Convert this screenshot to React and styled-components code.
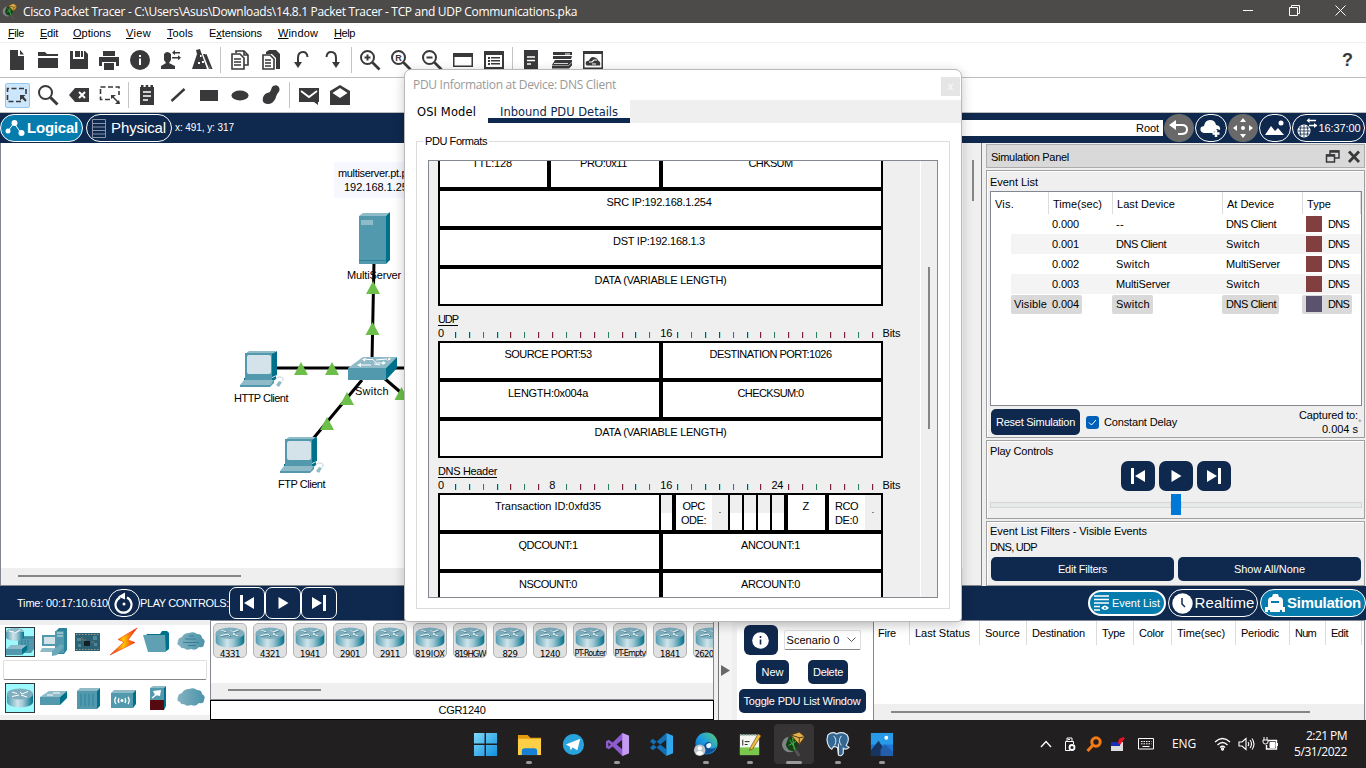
import React, { useLayoutEffect, useRef, useState } from "react";
import styled, { createGlobalStyle, css } from "styled-components";

const NAVY = "#0f284d";
const TEAL = "#067cae";
const INK = "#39393b";

const Global = createGlobalStyle`
  * { box-sizing: border-box; }
  body { margin: 0; overflow: hidden; background: #efefef; }
  body, button, input { font-family: "Liberation Sans", Arial, sans-serif; font-size: 11px; color: #000; }
  svg { display: block; flex: none; }
`;

/* Text whose tracking is adjusted so that it takes exactly w pixels. */
const Tracked = styled.span`
  display: inline-block;
  white-space: pre;
  line-height: 14px;
  font-size: ${(p) => p.$size || 11}px;
  font-weight: ${(p) => (p.$bold ? 700 : 400)};
  font-family: ${(p) => p.$font || "inherit"};
  color: ${(p) => p.$color || "inherit"};
  text-decoration: ${(p) => (p.$under ? "underline" : "none")};
  text-underline-offset: 2px;
`;
function Fit({ w, size, bold, font, color, under, children }) {
  const ref = useRef(null);
  const [ls, setLs] = useState(0);
  useLayoutEffect(() => {
    if (!w) return;
    const nat = ref.current.getBoundingClientRect().width;
    const n = ref.current.textContent.length;
    setLs((w - nat) / n);
  }, [w]);
  return (
    <Tracked ref={ref} $size={size} $bold={bold} $font={font} $color={color} $under={under} style={{ letterSpacing: ls + "px" }}>
      {children}
    </Tracked>
  );
}

const SEGOE = '"Open Sans", "Noto Sans", sans-serif';
const VERDANA = '"DejaVu Sans", sans-serif';

const Screen = styled.div`
  position: relative;
  display: flex;
  flex-direction: column;
  width: 1366px;
  height: 768px;
  overflow: hidden;
  background: #efefef;
`;

/* ---------- title and menu ---------- */
const TitleBar = styled.header`
  display: flex;
  align-items: center;
  height: 23px;
  flex: none;
  padding-left: 2px;
  gap: 5px;
  background: #4d4b4a;
  color: #fff;
`;
const WindowButtons = styled.div`
  display: flex;
  gap: 35px;
  margin-left: auto;
  padding: 0 20px 3px 0;
`;
const MenuBar = styled.nav`
  display: flex;
  align-items: center;
  height: 20px;
  flex: none;
  padding-left: 8px;
  background: #fff;
  border-bottom: 1px solid #f0f0f0;
`;
const MenuItem = styled.span`
  width: ${(p) => p.$w}px;
  u { text-underline-offset: 1px; }
`;

const ToolBar = styled.div`
  display: flex;
  align-items: center;
  height: 35px;
  flex: none;
  padding-left: ${(p) => p.$pad || 1.5}px;
  background: #fff;
  border-bottom: 1px solid #bdbdbd;
`;
const Tool = styled.span`
  display: flex;
  align-items: center;
  justify-content: center;
  width: 30.850px;
  height: 25px;
`;
const ActiveTool = styled(Tool)`
  width: 25px;
  margin: 0 3px;
  background: #cce6fb;
  border: 1px solid #95c6ee;
  border-radius: 2px;
`;
const Sep = styled.span`
  width: 1px;
  height: 26px;
  margin: 0 3px;
  background: #c4c4c4;
`;
const HelpMark = styled.span`
  margin-left: auto;
  padding-right: 13px;
  font: bold 18px "Liberation Sans", sans-serif;
  color: ${INK};
`;

const glyphs = {
  file: <path d="M4 1h8v6h6v14H4zM14 1l4 4.500h-4z" />,
  folder: <path d="M1 3h7l2 2h11v2H1zM1 9h20v10H1z" />,
  save: <path d="M2 2h3v8h11V2h1l3 3v15H2zM7 2h5v6H7zM13 2h2v6h-2z" />,
  print: <path d="M5 2h12v5H5zM1 8h20v9h-3v-4H4v4H1zM6 14h10v7H6z" />,
  info: (<g><circle cx="11" cy="11" r="10" /><path d="M10 9.500h2V16h-2zM10 6h2v2h-2z" fill="#fff" /></g>),
  user: (<g><path d="M4 5q3-4 7 0v6l-2 3 6 3v3H1v-3l5-3-2-3z" /><path d="M13 3h7v1.500h-7zM12 8h7v1.500h-7z" /><path d="M15 1v5l-3-2.200zM18 6.300v5l3-2.500z" /></g>),
  compass: (<g><path d="M5 1l4-1 1 3 6 17H1L6 5z" /><path d="M13.500 6l2-1 6 15h-2zM12 5h2l5 15h-1z" /><path d="M9 6h1.500v2H9zM7 13h2v2H7zM11 12h2v2h-2z" fill="#fff" /></g>),
  copy: (<g fill="none" stroke={INK} strokeWidth="1.600"><path d="M7 4V2h8l4 4v10h-4" /><path d="M3 5h8l4 4v11H3z" fill="#fff" /><path d="M5 10h7M5 13h7M5 16h7M15 2v4h4" /></g>),
  paste: (<g><path d="M6 3l3-2h7l4 4v15h-4V9l-4-4H6z" /><path d="M3 6h7l4 4v10H3z" fill="#fff" stroke={INK} strokeWidth="1.600" /><path d="M5 11h6M5 14h6M5 17h6" stroke={INK} strokeWidth="1.500" /></g>),
  undo: (<g><path d="M7 14V9q0-6 5-6 4 0 4.500 5" fill="none" stroke={INK} strokeWidth="2" /><path d="M3 13h8l-4 6z" /></g>),
  redo: (<g><path d="M15 14V9q0-6-5-6-4 0-4.500 5" fill="none" stroke={INK} strokeWidth="2" /><path d="M11 13h8l-4 6z" /></g>),
  zoomIn: (<g fill="none" stroke={INK} strokeWidth="2"><circle cx="8.500" cy="8.500" r="6.500" /><path d="M13.500 13.500l7 7" strokeWidth="2.600" /><path d="M5.500 8.500h6M8.500 5.500v6" /></g>),
  zoomReset: (<g><g fill="none" stroke={INK} strokeWidth="2"><circle cx="8.500" cy="8.500" r="6.500" /><path d="M13.500 13.500l7 7" strokeWidth="2.600" /></g><text x="5.300" y="12" fontSize="9" fontWeight="bold">R</text></g>),
  zoomOut: (<g fill="none" stroke={INK} strokeWidth="2"><circle cx="8.500" cy="8.500" r="6.500" /><path d="M13.500 13.500l7 7" strokeWidth="2.600" /><path d="M5.500 8.500h6" /></g>),
  window: <path d="M1 4h20v14H1zM2.500 8v8.500h17V8z" fillRule="evenodd" />,
  listWindow: (<g><path d="M1 2h20v18H1zM3 6v12h16V6z" fillRule="evenodd" /><path d="M5 8h2v2H5zM8 8h9v1.600H8zM5 11h2v2H5zM8 11h9v1.600H8zM5 14h2v2H5zM8 14h9v1.600H8z" /></g>),
  doc: (<g><path d="M4 1h14v20H4z" /><path d="M7 8h8M7 11.500h8M7 15h4" stroke="#fff" strokeWidth="1.300" /></g>),
  stack: (<g><path d="M2 3h19v3H2zM2 7h19l-1 3H2z" /><path d="M14 5h5" stroke="#fff" /><path d="M4 11h17v2l-3 3H1z" /><path d="M1 16.500h17l3-3v3l-3 3H1z" /><path d="M3 14.500h14" stroke="#fff" strokeWidth=".8" /></g>),
  cloudWindow: (<g><path d="M1 2h20v18H1zM2.500 5v13.500h17V5z" fillRule="evenodd" /><path d="M5 16.500q-2-1-1-4l3-1q2-5 6-3 3 1 3 3 3 1 2 5z" /><path d="M7 13h3l2-2h3M10 15h4" fill="none" stroke="#fff" strokeWidth="1.100" /></g>),
  marquee: (<g><path d="M1.500 8V4.500H20V11M1.500 11v6.500H15" fill="none" stroke={INK} strokeWidth="1.600" strokeDasharray="5 2.500" /><path d="M14 11h5.500l-1.800 1.800 3 3.500-1.400 1.400-3.200-3.200L14 16.500z" /></g>),
  search: (<g fill="none" stroke={INK}><circle cx="8.500" cy="8.500" r="6.500" strokeWidth="2" /><path d="M13.500 13.500l7 7" strokeWidth="3" /></g>),
  erase: (<g><path d="M7 4h14v14H7l-6-7z" /><path d="M11 8l6 6M17 8l-6 6" stroke="#fff" strokeWidth="2" /></g>),
  resize: (<g><path d="M1.500 3h18.500v8M1.500 5v10.500H12" fill="none" stroke={INK} strokeWidth="1.600" strokeDasharray="5 2.500" /><path d="M13 12l7 7" stroke={INK} strokeWidth="1.500" /><path d="M12 11h5l-5 4zM21 20h-5l4-4z" /></g>),
  note: (<g><path d="M4 3h14v18H4z" /><path d="M5 1h2.500v3H5zM9.700 1h2.500v3H9.700zM14.500 1H17v3h-2.500z" /><path d="M7 8h8M7 12h8M7 16h5" stroke="#fff" strokeWidth="1.500" /></g>),
  line: <path d="M4.500 17L17.500 5" stroke={INK} strokeWidth="2.400" />,
  rect: <path d="M2 6h18v11H2z" />,
  oval: <ellipse cx="11" cy="11.500" rx="8.500" ry="5" />,
  blob: <path d="M12 3q3-3 6.500-.5Q21 6 17.500 9.500q-1 1.500-2 5Q12.500 20.500 7 20q-5.500-1-4-6.500Q4.500 9 9 8.500q1.500-.5 3-5.500z" />,
  mail: (<g><path d="M1 4h20v14h-1v3l-4-3H1z" /><path d="M3 7l8 6 8-6" fill="none" stroke="#fff" strokeWidth="1.800" /></g>),
  mailOpen: (<g><path d="M11 1l10 6v14H1V7z" /><path d="M3.500 9L11 4l7.500 5L11 14z" fill="#fff" /></g>),
};
const Glyph = ({ name }) => (
  <svg width="22" height="22" viewBox="0 0 22 22" fill={INK}>{glyphs[name]}</svg>
);
const toolsTop = ["file", "folder", "save", "print", "info", "user", "compass", "|", "copy", "paste", "undo", "redo", "|", "zoomIn", "zoomReset", "zoomOut", "window", "listWindow", "|", "doc", "stack", "cloudWindow"];
const toolsBottom = ["search", "erase", "resize", "|", "note", "line", "rect", "oval", "blob", "|", "mail", "mailOpen"];
const renderTools = (list) => list.map((t, i) => (t === "|" ? <Sep key={i} /> : <Tool key={i}><Glyph name={t} /></Tool>));

/* ---------- navy bars ---------- */
const NavBar = styled.div`
  display: flex;
  align-items: center;
  height: 30px;
  flex: none;
  padding: 0 1px 0 0;
  background: ${NAVY};
  color: #fff;
`;
const Pill = styled.div`
  display: flex;
  align-items: center;
  justify-content: center;
  gap: ${(p) => p.$gap ?? 3}px;
  flex: none;
  width: ${(p) => p.$w}px;
  height: ${(p) => p.$h || 28}px;
  margin-right: ${(p) => p.$mr || 0}px;
  border: ${(p) => p.$bw || 1}px solid #fff;
  border-radius: 15px;
  background: ${(p) => (p.$on ? TEAL : NAVY)};
  color: #fff;
  ${(p) => p.$grey && css`background: #696969; border-color: #696969;`}
`;
const RootField = styled.div`
  display: flex;
  flex: 1;
  justify-content: flex-end;
  align-items: center;
  height: 16px;
  margin-left: 400px;
  padding-right: 4px;
  margin-right: 1px;
  background: #fff;
  color: #000;
`;

/* ---------- workspace ---------- */
const Main = styled.main`
  display: flex;
  height: 443px;
  flex: none;
`;
const Workspace = styled.section`
  display: grid;
  grid-template: 425px 17px / 962px 18px;
  width: 982px;
  border: 1px solid #82878f;
  border-top: 0;
  background: #efefef;
`;
const Canvas = styled.div`
  position: relative;
  background: #fff;
  overflow: hidden;
`;
const CanvasLabel = styled.div`
  position: absolute;
  left: ${(p) => p.$x}px;
  top: ${(p) => p.$y}px;
  width: 100px;
  text-align: center;
`;
const HostNote = styled.div`
  position: absolute;
  left: 333px;
  top: 19px;
  width: 100px;
  height: 36px;
  padding: 4px 0 0 4px;
  background: #f7f7ff;
  display: flex;
  flex-direction: column;
`;
const HostAddress = styled.div`padding-left: 6px;`;
const VTrack = styled.div`padding: 17px 0 0 9px;`;
const HTrack = styled.div`padding: 7px 0 0 17px;`;
const Thumb = styled.div`
  width: ${(p) => p.$w}px;
  height: ${(p) => p.$h}px;
  background: #858585;
`;

const PcArt = () => (
  <g>
    <path d="M5 3l4-3h27l-3 3z" fill="#8fbac8" />
    <path d="M5 2h28v24H5z" fill="#5399ae" />
    <path d="M32 3l5-3v24l-5 2z" fill="#00718b" />
    <rect x="7" y="4" width="24" height="19" rx="2" fill="#d3e3e9" />
    <path d="M4 27h28l4-2v3l-4 3H4z" fill="#00718b" />
    <path d="M5 26h27v3H5z" fill="#5399ae" />
    <path d="M4 29h30l-4 5H0z" fill="#8fbac8" />
    <path d="M0 34h30l4-5v3l-4 4H0z" fill="#5399ae" />
    <path d="M36 28q1-3 5-2 4 2 1 4" fill="none" stroke="#c3d2d8" />
    <path d="M36 34l3-4 3 1-3 5z" fill="#8fbac8" />
  </g>
);
const Triangle = ({ x, y }) => <path d={`M${x} ${y - 7}l7 13h-14z`} fill="#6cc04a" />;
const Topology = () => (
  <svg width="420" height="425" viewBox="1 143 420 425">
    <g stroke="#000" strokeWidth="3">
      <path d="M374 262L372 360M270 368H350M390 368H420M362 380L312 440M384 378L420 409" />
    </g>
    <path d="M359 216l4-3h27l-4 3z" fill="#8fbac8" />
    <path d="M386 216l4-4v48l-4 4z" fill="#00718b" />
    <path d="M359 216h27v48h-27z" fill="#5399ae" />
    <path d="M361 220h12v5h-12z" fill="#8fbac8" />
    <path d="M359 260.500h27" stroke="#28809a" />
    <path d="M348 368l15-11h34l-11 11z" fill="#8fbac8" />
    <path d="M348 368h38v12h-38z" fill="#5399ae" />
    <path d="M386 368l11-11v11l-11 12z" fill="#00718b" />
    <path d="M366 359.500h7l3 3.500h8M376 360l11-1M360 365h11M374 364l6 1" stroke="#fff" strokeWidth="1" fill="none" />
    <path d="M366 357.500l-4 2 3 2zM389 357.500l-2 3.500 4-2zM361 363l-4 2 4 2zM383 361l-1 4 4-2z" fill="#fff" />
    <g transform="translate(240 351)"><PcArt /></g>
    <g transform="translate(280 437)"><PcArt /></g>
    <Triangle x={373} y={288} /><Triangle x={372.500} y={329} /><Triangle x={301} y={369} />
    <Triangle x={332} y={369} /><Triangle x={347} y={399} /><Triangle x={327} y={424} /><Triangle x={401.500} y={394} />
  </svg>
);

/* ---------- simulation panel ---------- */
const SimPanel = styled.aside`
  display: flex;
  flex-direction: column;
  gap: 2px;
  width: 380px;
  margin-left: 4px;
  padding: 1px 1px 0 0;
`;
const SimHeader = styled.div`
  display: flex;
  align-items: center;
  justify-content: space-between;
  height: 25px;
  padding: 1px 3px 0 4px;
  background: #d9d9d9;
  border: 1px solid #adadad;
`;
const HeaderIcons = styled.div`display: flex; gap: 7px;`;
const Group = styled.section`
  height: ${(p) => p.$h}px;
  flex: none;
  padding: 0 2px 0 3px;
  border: 1px solid #a0a0a0;
  box-shadow: inset 1px 1px #fff;
  overflow: hidden;
`;
const Line = styled.div`
  display: flex;
  align-items: center;
  height: ${(p) => p.$h}px;
  padding-top: ${(p) => p.$pt || 0}px;
`;
const EventTable = styled.div`
  height: 215px;
  border: 1px solid #828790;
  background: #fff;
`;
const EventRow = styled.div`
  display: grid;
  grid-template-columns: 37px 64px 110px 80px 58px;
  align-items: center;
  height: 20px;
  margin-left: 20px;
  background: ${(p) => (p.$alt ? "#f4f4f4" : "#fff")};
`;
const EventHead = styled.div`
  display: grid;
  grid-template-columns: 58px 64px 110px 80px 58px;
  height: 22px;
`;
const HeadCell = styled.div`
  display: flex;
  align-items: center;
  padding: 1px 0 0 4px;
  border-right: 1px solid #dcdcdc;
`;
const Cell = styled.div`
  display: flex;
  align-items: center;
  justify-self: start;
  height: 19px;
  padding: 0 3px 0 ${(p) => p.$pl ?? 4}px;
  border-radius: 2px;
  background: ${(p) => (p.$sel ? "#d9d9d9" : "transparent")};
`;
const Swatch = styled.i`
  width: 16px;
  height: 16px;
  margin-right: 6px;
  background: ${(p) => p.$c};
`;
const Btn = styled.button`
  display: flex;
  align-items: center;
  justify-content: center;
  flex: none;
  width: ${(p) => p.$w}px;
  height: ${(p) => p.$h}px;
  padding: 0;
  border: 0;
  border-radius: ${(p) => p.$r || 5}px;
  background: ${NAVY};
  color: #fff;
`;
const ActionLine = styled.div`
  display: flex;
  align-items: center;
  padding: 2px 0 0 1px;
`;
const Check = styled.span`
  display: flex;
  align-items: center;
  justify-content: center;
  width: 13px;
  height: 13px;
  margin: 0 5px 0 6px;
  border-radius: 3px;
  background: #005fb8;
`;
const Captured = styled.div`
  display: flex;
  flex-direction: column;
  align-items: flex-end;
  margin-left: auto;
`;
const Star = styled.span`
  width: 4px;
  color: #999;
  font-size: 9px;
`;
const PlayRow = styled.div`
  display: flex;
  justify-content: center;
  gap: 4px;
`;
const Slider = styled.div`
  display: flex;
  align-items: center;
  height: 21px;
  margin-top: 3px;
  &::before, &::after { content: ""; height: 4px; border: 1px solid #d6d6d6; background: #e7eaea; flex: 1; }
`;
const Knob = styled.i`width: 10px; height: 21px; background: #0078d7;`;
const FilterButtons = styled.div`display: flex; gap: 4px; padding: 3px 0 0 1px;`;

const events = [
  ["", "0.000", "--", "DNS Client"],
  ["", "0.001", "DNS Client", "Switch"],
  ["", "0.002", "Switch", "MultiServer"],
  ["", "0.003", "MultiServer", "Switch"],
  ["Visible", "0.004", "Switch", "DNS Client"],
];
const widths = { "DNS Client": 50, Switch: 34, MultiServer: 54, "--": 8 };

const PrevIcon = () => <svg width="16" height="18" viewBox="0 0 16 18" fill="#fff"><path d="M1 1h3v16H1zM15 3v12L5 9z" /></svg>;
const PlayIcon = () => <svg width="12" height="14" viewBox="0 0 12 14" fill="#fff"><path d="M1.500 1v12L11.500 7z" /></svg>;
const NextIcon = () => <svg width="16" height="18" viewBox="0 0 16 18" fill="#fff"><path d="M12 1h3v16h-3zM1 3v12l10-6z" /></svg>;

function Simulation() {
  return (
    <SimPanel>
      <SimHeader>
        <Fit w={78}>Simulation Panel</Fit>
        <HeaderIcons>
          <svg width="15" height="15" viewBox="0 0 15 15" fill="none" stroke={INK} strokeWidth="1.500"><path d="M5 5V2h9v7h-4" /><path d="M5 2.500h9" strokeWidth="2.500" /><path d="M1.500 6h8v7h-8z" /><path d="M1.500 6.500h8" strokeWidth="2.500" /></svg>
          <svg width="14" height="15" viewBox="0 0 14 15"><path d="M2 2.500l10 10.500M12 2.500L2 13" stroke={INK} strokeWidth="2.800" /></svg>
        </HeaderIcons>
      </SimHeader>
      <Group $h={268}>
        <Line $h={20} $pt={2}><Fit w={48}>Event List</Fit></Line>
        <EventTable>
          <EventHead>
            <HeadCell><Fit w={19}>Vis.</Fit></HeadCell>
            <HeadCell><Fit w={49}>Time(sec)</Fit></HeadCell>
            <HeadCell><Fit w={58}>Last Device</Fit></HeadCell>
            <HeadCell><Fit w={47}>At Device</Fit></HeadCell>
            <HeadCell><Fit w={24}>Type</Fit></HeadCell>
          </EventHead>
          {events.map(([vis, time, last, at], i) => {
            const sel = i === 4;
            return (
              <EventRow key={i} $alt={i % 2 === 1}>
                {vis ? <Cell $sel={sel} $pl={3}><Fit w={33}>{vis}</Fit></Cell> : <span />}
                <Cell $sel={sel} $pl={4}><Fit w={27}>{time}</Fit></Cell>
                <Cell $sel={sel} $pl={4}><Fit w={widths[last]}>{last}</Fit></Cell>
                <Cell $sel={sel} $pl={4}><Fit w={widths[at]}>{at}</Fit></Cell>
                <Cell $sel={sel} $pl={4}><Swatch $c={sel ? "#5b5270" : "#823f40"} /><Fit w={21}>DNS</Fit></Cell>
              </EventRow>
            );
          })}
        </EventTable>
        <ActionLine>
          <Btn $w={89} $h={26}><Fit w={79}>Reset Simulation</Fit></Btn>
          <Check><svg width="9" height="7" viewBox="0 0 9 7"><path d="M1 3.500L3.500 6 8 1" fill="none" stroke="#fff" /></svg></Check>
          <Fit w={73}>Constant Delay</Fit>
          <Captured><Fit w={59}>Captured to:</Fit><Fit w={36}>0.004 s</Fit></Captured>
          <Star>*</Star>
        </ActionLine>
      </Group>
      <Group $h={79}>
        <Line $h={20}><Fit w={63}>Play Controls</Fit></Line>
        <PlayRow>
          <Btn $w={34} $h={30} $r={7}><PrevIcon /></Btn>
          <Btn $w={34} $h={30} $r={7}><PlayIcon /></Btn>
          <Btn $w={34} $h={30} $r={7}><NextIcon /></Btn>
        </PlayRow>
        <Slider><Knob /></Slider>
      </Group>
      <Group $h={65}>
        <Line $h={17}><Fit w={157}>Event List Filters - Visible Events</Fit></Line>
        <Line $h={15}><Fit w={47}>DNS, UDP</Fit></Line>
        <FilterButtons>
          <Btn $w={183} $h={24}><Fit w={49}>Edit Filters</Fit></Btn>
          <Btn $w={183} $h={24}><Fit w={71}>Show All/None</Fit></Btn>
        </FilterButtons>
      </Group>
    </SimPanel>
  );
}

/* ---------- playback bar ---------- */
const PlayBar = styled.div`
  display: flex;
  align-items: center;
  height: 34px;
  flex: none;
  padding-left: 17px;
  background: ${NAVY};
  color: #fff;
`;
const SquareBtn = styled.span`
  display: flex;
  align-items: center;
  justify-content: center;
  width: 36px;
  height: 32px;
  border: 1px solid #fff;
  border-radius: 7px;
`;
const RightModes = styled.div`
  display: flex;
  align-items: center;
  margin-left: auto;
`;

/* ---------- device palette ---------- */
const Bottom = styled.section`
  display: flex;
  height: 100px;
  flex: none;
`;
const Palette = styled.div`
  display: flex;
  flex-direction: column;
  width: 210px;
  height: 90px;
  margin-top: 5px;
  padding-top: 2px;
  background: #fff;
`;
const PaletteRow = styled.div`
  display: flex;
  gap: 4.200px;
  padding-left: 5px;
`;
const PaletteItem = styled.span`
  display: flex;
  align-items: center;
  justify-content: center;
  width: 30px;
  height: 30px;
  ${(p) => p.$on && css`background: #9cfaff; border: 1px solid #2c3a40;`}
`;
const SearchBox = styled.div`
  height: 20px;
  margin: 3px 3px;
  border: 1px solid #dedede;
  border-bottom-color: #868686;
  border-radius: 2px;
`;
const DeviceColumn = styled.div`
  display: flex;
  flex-direction: column;
  width: 504px;
  margin-right: 1px;
`;
const DeviceList = styled.div`
  display: flex;
  flex-direction: column;
  justify-content: space-between;
  height: 80px;
  border: 1px solid #828790;
  background: #fff;
  overflow: hidden;
`;
const DeviceRow = styled.div`
  display: flex;
  gap: 6px;
  padding: 2px 0 0 2px;
`;
const Device = styled.div`
  display: flex;
  flex-direction: column;
  align-items: center;
  flex: none;
  width: 34px;
  height: 35px;
  padding-top: 3px;
  border: 1px solid #b4b4b4;
  border-radius: 5px;
  background: #e1e1e1;
  overflow: hidden;
`;
const DeviceName = styled.div`
  display: flex;
  justify-content: center;
  height: 11px;
  margin-top: -1px;
  line-height: 11px;
`;
const DeviceTrack = styled.div`
  height: 16px;
  padding: 6px 0 0 17px;
  background: #efefef;
`;
const ModelBox = styled.div`
  display: flex;
  align-items: center;
  justify-content: center;
  height: 20px;
  border: 1px solid #000;
  background: #fff;
`;
const Splitter = styled.div`
  display: flex;
  align-items: center;
  width: 14px;
  margin: 0 5px 0 3px;
  border-left: 1px solid #777;
  padding-left: 2px;
  background: #f4f4f4;
`;
const Scenario = styled.div`
  display: flex;
  flex-direction: column;
  align-items: center;
  gap: 5px;
  width: 136px;
  padding: 5px 6px 0 0;
  background: linear-gradient(#e8e8e8, #fff 14px);
`;
const ScenarioLine = styled.div`
  display: flex;
  align-items: center;
  gap: ${(p) => p.$g}px;
`;
const Select = styled.div`
  display: flex;
  align-items: center;
  justify-content: space-between;
  width: 77px;
  height: 20px;
  padding: 0 4px 0 2px;
  border: 1px solid #dedede;
  border-bottom-color: #868686;
  border-radius: 2px;
  background: #fff;
`;
const PduList = styled.div`
  display: flex;
  flex-direction: column;
  justify-content: space-between;
  flex: 1;
  margin-right: 1px;
  border: 1px solid #828790;
  border-bottom: 0;
  background: #fff;
`;
const PduHead = styled.div`display: flex; height: 24px;`;
const PduCol = styled.div`
  display: flex;
  align-items: center;
  width: ${(p) => p.$w}px;
  padding-left: 5px;
  border-right: 1px solid #dcdcdc;
  &:first-child { padding-left: 4px; }
`;
const PduTrack = styled.div`
  height: 16px;
  padding: 7px 0 0 17px;
  background: #efefef;
`;

const Defs = () => (
  <svg width="0" height="0" viewBox="0 0 1 1" style={{ position: "absolute" }}>
    <defs>
      <linearGradient id="metal"><stop offset="0" stopColor="#4f9bb1" /><stop offset=".4" stopColor="#cfe3e9" /><stop offset=".6" stopColor="#a5cad5" /><stop offset="1" stopColor="#00718b" /></linearGradient>
      <linearGradient id="haze"><stop offset="0" stopColor="#84b2c1" /><stop offset="1" stopColor="#4b93a9" /></linearGradient>
      <linearGradient id="gBolt" x1="0" x2="1"><stop offset="0" stopColor="#f01010" /><stop offset=".5" stopColor="#ffc800" /><stop offset="1" stopColor="#f01010" /></linearGradient>
      <linearGradient id="gWin" x1="0" y1="0" x2="1" y2="1"><stop offset="0" stopColor="#7fd8fb" /><stop offset="1" stopColor="#1090dd" /></linearGradient>
      <linearGradient id="gEdge" x1="0" y1="1" x2="1" y2="0"><stop offset="0" stopColor="#0b5cab" /><stop offset=".5" stopColor="#1b9de2" /><stop offset="1" stopColor="#5ed06a" /></linearGradient>
    </defs>
  </svg>
);
const RouterArt = ({ w = 30, h = 21 }) => (
  <svg width={w} height={h} viewBox="0 0 30 22">
    <path d="M0 6.500v9c0 8 30 8 30 0v-9z" fill="url(#metal)" />
    <ellipse cx="15" cy="6.500" rx="15" ry="6" fill="#7fafbf" />
    <path d="M6 3.500l5 1.500M24 3l-6 2.500-2-2M5 9l8-1.500M24 9.500l-6-2 2-1M13 7.500l2 2" stroke="#4d8496" strokeWidth="1.400" fill="none" transform="translate(.7 .7)" />
    <path d="M6 3.500l5 1.500M24 3l-6 2.500-2-2M5 9l8-1.500M24 9.500l-6-2 2-1M13 7.500l2 2" stroke="#fff" strokeWidth="1" fill="none" />
  </svg>
);
const CloudShape = () => <path d="M4 19q-4-1-2-5 0-3 4-4 2-4 7-4 5-2 8 1 5 0 5 4 4 2 2 6 0 4-5 3-3 4-8 2-5 2-7-1-3 1-4-2z" fill="url(#haze)" />;
const paletteArt = {
  network: (<g><path d="M13 14l3-5h13v13l-3 4H13z" fill="#5399ae" /><path d="M16 11h12M17 13v10M20 13v10M23 13v10" stroke="#28809a" /><ellipse cx="10" cy="4.500" rx="9" ry="3.500" fill="#8fbac8" /><path d="M1 5v5c0 5 18 5 18 0V5z" fill="url(#metal)" /><path d="M4 4l5 1M15 3l-5 3" stroke="#fff" /><path d="M1 22l5-4h16l-5 4z" fill="#8fbac8" /><path d="M1 22h16v6H1z" fill="#5399ae" /><path d="M17 22l5-4v5l-5 5z" fill="#00718b" /></g>),
  end: (<g><path d="M17 4l3-3h8v22l-3 4h-8z" fill="#2b839c" /><path d="M16 4h9v22h-9z" fill="#5399ae" /><path d="M18 6h6M18 9h6" stroke="#cfe2e8" /><path d="M3 8h15v11H3z" fill="#5399ae" /><path d="M5 10h11v7H5z" fill="#d3e3e9" /><path d="M3 21h15l-3 4H1z" fill="#8fbac8" /><path d="M13 24l9-7 3 2-7 9-5 1z" fill="#6ba8ba" /></g>),
  board: (<g><path d="M2 6h25v18H2z" fill="#2a6175" /><path d="M3 7.500h23M3 22.500h23" stroke="#a59a85" strokeDasharray="1.500 1.500" strokeWidth="1.200" /><path d="M11 14h6v5h-6z" fill="#151f25" /><path d="M4 11h4v3H4zM20 9h4v4h-4zM5 17h3v3H5zM21 16h3v3h-3z" fill="#4f8798" /><path d="M9 10v3h4M18 15h3" stroke="#8a7450" fill="none" /></g>),
  bolt: <path d="M29 1L10 12.500l6 2.500L2 28l25-12.500-7-2.500z" fill="url(#gBolt)" stroke="#f03a10" strokeWidth=".6" />,
  folder: (<g><path d="M4 7h14l2-3h5l2 2v16l-4 3z" fill="#00718b" /><path d="M1 8h22l1 17H6z" fill="#5fa0b3" /></g>),
  clouds: (<g><CloudShape /><path d="M9 12h11M7 15.500h16M13 9h5M12 18.500h8" stroke="#3b7f95" strokeWidth="1.200" /></g>),
  switch: (<g><path d="M1 14l9-6h18l-7 6z" fill="#8fbac8" /><path d="M1 14h20v8H1z" fill="#5399ae" /><path d="M21 14l7-6v7l-7 7z" fill="#00718b" /><path d="M8 12h6M14 10h7" stroke="#fff" /></g>),
  hub: (<g><path d="M4 8l3-3h20l-3 3z" fill="#8fbac8" /><path d="M4 8h20v18H4z" fill="#5399ae" /><path d="M24 8l3-3v18l-3 3z" fill="#00718b" /><path d="M8 11v12M12 11v12M16 11v12M20 11v12" stroke="#28809a" /></g>),
  wifi: (<g><path d="M3 10l3-3h22l-3 3z" fill="#8fbac8" /><path d="M3 10h22v15H3z" fill="#5399ae" /><path d="M25 10l3-3v14l-3 4z" fill="#00718b" /><circle cx="14" cy="17.500" r="1.500" fill="#fff" /><path d="M11 15q-1.500 2.500 0 5M17 15q1.500 2.500 0 5M8 14q-2.500 3.500 0 7M20 14q2.500 3.500 0 7" stroke="#fff" strokeWidth="1.300" fill="none" /></g>),
  asa: (<g><path d="M8 5l3-2h13l-2 2z" fill="#8fbac8" /><path d="M8 5h14v12H8z" fill="#5399ae" /><path d="M22 5l2-2v20l-2 4z" fill="#00718b" /><path d="M8 17h14v10H8z" fill="#550a10" /><path d="M11 8l8-1-1 6-5-1z" fill="#fff" /><path d="M10 15l5-4" stroke="#fff" strokeWidth="1.500" /></g>),
  cloud: <CloudShape />,
};
const Art = ({ name }) => (
  <svg width="30" height="30" viewBox="0 0 30 30">
    {name === "router" ? <g transform="translate(2 5)"><path d="M0 6v8c0 7 26 7 26 0V6z" fill="url(#metal)" /><ellipse cx="13" cy="6" rx="13" ry="5.500" fill="#7fafbf" /><path d="M5 4l5 1.500M21 3.500l-6 2.500-2-2M5 8.500l7-1.500M20 9l-6-2" stroke="#fff" fill="none" /></g> : paletteArt[name]}
  </svg>
);
const devices = [["4331", 20], ["4321", 20], ["1941", 20], ["2901", 20], ["2911", 20], ["819IOX", 30], ["819HGW", 31], ["829", 15], ["1240", 20], ["PT-Router", 31], ["PT-Empty", 31], ["1841", 20], ["2620XM", 31]];
const pduCols = [["Fire", 36, 18], ["Last Status", 70, 55], ["Source", 47, 35], ["Destination", 70, 53], ["Type", 37, 23], ["Color", 38, 25], ["Time(sec)", 64, 48], ["Periodic", 54, 38], ["Num", 36, 21], ["Edit", 36, 17]];

/* ---------- PDU dialog ---------- */
const Dialog = styled.div`
  position: absolute;
  left: 404px;
  top: 69px;
  width: 558px;
  height: 553px;
  border: 1px solid #b9b9b9;
  border-radius: 7px 7px 4px 4px;
  background: #fff;
  box-shadow: 0 3px 12px rgba(0, 0, 0, 0.22);
  display: flex;
  flex-direction: column;
`;
const DialogTitle = styled.div`
  display: flex;
  align-items: center;
  justify-content: space-between;
  height: 30px;
  padding-left: 8px;
`;
const CloseX = styled.span`
  display: flex;
  align-items: center;
  justify-content: center;
  width: 19px;
  height: 19px;
  margin-top: 3px;
  margin-right: 1px;
  background: #e5e5e5;
  color: #f7f7f7;
  font: bold 10px "Liberation Sans", sans-serif;
`;
const Tabs = styled.div`
  display: flex;
  height: 23px;
  background: #efefef;
`;
const Tab = styled.div`
  display: flex;
  align-items: center;
  justify-content: center;
  width: ${(p) => p.$w}px;
  padding-top: ${(p) => (p.$on ? 5 : 1)}px;
  background: #fff;
  border-bottom: ${(p) => (p.$on ? `5px solid ${NAVY}` : "0")};
`;
const Formats = styled.fieldset`
  display: flex;
  width: 534px;
  height: 475px;
  margin: 11px 0 0 11px;
  padding: 12px 11px 10px;
  border: 1px solid #dcdcdc;
`;
const Legend = styled.legend`
  height: 14px;
  margin-left: -5px;
  padding: 0 2px;
  line-height: 14px;
`;
const Scroller = styled.div`
  display: flex;
  width: 510px;
  height: 438px;
  border: 1px solid #828790;
  background: #efefef;
  overflow: hidden;
`;
const PduBody = styled.div`
  width: 492px;
  padding-left: 9px;
  border-right: 1px solid #fff;
  height: 436px;
  overflow: hidden;
`;
const PduTrackV = styled.div`padding: 106px 0 0 7px;`;
const Table = styled.div`
  width: 445px;
  margin-top: ${(p) => p.$mt || 0}px;
`;
const Row = styled.div`display: flex; height: 39px;`;
const Field = styled.div`
  display: flex;
  justify-content: center;
  align-items: flex-start;
  width: ${(p) => p.$w}px;
  flex: none;
  padding: 4px ${(p) => p.$pr ?? 3}px 0 0;
  border: 2px solid #000;
  background: #fff;
`;
const Flag = styled.div`
  width: ${(p) => p.$w}px;
  flex: none;
  border: solid #000;
  border-width: 2px ${(p) => (p.$last ? 2 : 0)}px 2px ${(p) => (p.$first ? 0 : 2)}px;
  background: linear-gradient(#efefef 18px, #fff 18px);
`;
const Narrow = styled.div`
  display: flex;
  width: ${(p) => p.$w}px;
  flex: none;
  border: 2px solid #000;
  background: #fff;
`;
const NarrowText = styled.div`
  display: flex;
  flex-direction: column;
  align-items: center;
  flex: 1;
  padding: 4px 1px 0 0;
`;
const Overflow = styled.div`
  display: flex;
  align-items: center;
  justify-content: center;
  width: 16px;
  background: #efefef;
  &::after { content: ""; width: 2px; height: 1px; background: #888; }
`;
const Heading = styled.div`
  height: 14px;
  margin-top: 6px;
`;
const Ruler = styled.div`
  display: flex;
  height: 14px;
  width: 480px;
  align-items: center;
`;
const Bit = styled.span`
  display: flex;
  width: 13.900px;
  flex: none;
  white-space: nowrap;
`;
const Tick = styled.i`
  width: 2px;
  height: 6px;
  margin: 4px 0 0 3px;
  background: ${(p) => (p.$odd ? "linear-gradient(90deg,#7a2436 50%,#a5dede 50%)" : "linear-gradient(90deg,#2e7f62 50%,#e6e6f0 50%)")};
`;
const ScaleBar = ({ marks }) => (
  <Ruler>
    {Array.from({ length: 32 }, (_, i) => (
      <Bit key={i}>{marks.includes(i) ? <Fit w={i > 9 ? 12 : 6}>{String(i)}</Fit> : <Tick $odd={i % 3 !== 0} />}</Bit>
    ))}
    <Fit w={18}>Bits</Fit>
  </Ruler>
);

function PduDialog() {
  return (
    <Dialog>
      <DialogTitle>
        <Fit w={203} size={12} font={SEGOE} color="#999">PDU Information at Device: DNS Client</Fit>
        <CloseX>x</CloseX>
      </DialogTitle>
      <Tabs>
        <Tab $w={83}><Fit w={59} size={11.5} font={VERDANA}>OSI Model</Fit></Tab>
        <Tab $w={142} $on><Fit w={118} size={11.5} font={VERDANA} color={NAVY}>Inbound PDU Details</Fit></Tab>
      </Tabs>
      <Formats>
        <Legend><Fit w={62}>PDU Formats</Fit></Legend>
        <Scroller>
          <PduBody>
            <Table $mt={-11}>
              <Row><Field $w={111}><Fit w={40}>TTL:128</Fit></Field><Field $w={112}><Fit w={47}>PRO:0x11</Fit></Field><Field $w={222}><Fit w={44}>CHKSUM</Fit></Field></Row>
              <Row><Field $w={445}><Fit w={105}>SRC IP:192.168.1.254</Fit></Field></Row>
              <Row><Field $w={445}><Fit w={92}>DST IP:192.168.1.3</Fit></Field></Row>
              <Row><Field $w={445} $pr={0}><Fit w={132}>DATA (VARIABLE LENGTH)</Fit></Field></Row>
            </Table>
            <Heading><Fit w={20} under>UDP</Fit></Heading>
            <ScaleBar marks={[0, 16]} />
            <Table $mt={1}>
              <Row><Field $w={223}><Fit w={87}>SOURCE PORT:53</Fit></Field><Field $w={222}><Fit w={122}>DESTINATION PORT:1026</Fit></Field></Row>
              <Row><Field $w={223}><Fit w={80}>LENGTH:0x004a</Fit></Field><Field $w={222}><Fit w={66}>CHECKSUM:0</Fit></Field></Row>
              <Row><Field $w={445} $pr={0}><Fit w={132}>DATA (VARIABLE LENGTH)</Fit></Field></Row>
            </Table>
            <Heading><Fit w={59} under>DNS Header</Fit></Heading>
            <ScaleBar marks={[0, 8, 16, 24]} />
            <Table $mt={1}>
              <Row>
                <Field $w={223}><Fit w={106}>Transaction ID:0xfd35</Fit></Field>
                <Flag $w={13} $last $first />
                <Narrow $w={56}><NarrowText><Fit w={22}>OPC</Fit><Fit w={25}>ODE:</Fit></NarrowText><Overflow /></Narrow>
                <Flag $w={12} $first /><Flag $w={14} /><Flag $w={14} /><Flag $w={16} $last />
                <Field $w={41} $pr={1}><Fit w={7}>Z</Fit></Field>
                <Narrow $w={56}><NarrowText><Fit w={23}>RCO</Fit><Fit w={23}>DE:0</Fit></NarrowText><Overflow /></Narrow>
              </Row>
              <Row><Field $w={223}><Fit w={59}>QDCOUNT:1</Fit></Field><Field $w={222}><Fit w={59}>ANCOUNT:1</Fit></Field></Row>
              <Row><Field $w={223}><Fit w={58}>NSCOUNT:0</Fit></Field><Field $w={222}><Fit w={59}>ARCOUNT:0</Fit></Field></Row>
            </Table>
          </PduBody>
          <PduTrackV><Thumb $w={2} $h={162} /></PduTrackV>
        </Scroller>
      </Formats>
    </Dialog>
  );
}

/* ---------- taskbar ---------- */
const TaskBar = styled.footer`
  display: flex;
  align-items: center;
  height: 48px;
  flex: none;
  padding-left: 463px;
  background: #211f20;
  color: #fff;
`;
const TaskItem = styled.span`
  display: flex;
  flex-direction: column;
  align-items: center;
  justify-content: flex-end;
  gap: 4px;
  width: 40px;
  height: 40px;
  margin: 0 2.050px;
  border-radius: 4px;
  background: ${(p) => (p.$active ? "#363435" : "transparent")};
  &::after { content: ""; width: ${(p) => (p.$active ? 16 : 6)}px; height: 3px; border-radius: 2px; background: ${(p) => (p.$dot ? "#9a9a9a" : "transparent")}; }
`;
const Tray = styled.div`
  display: flex;
  align-items: center;
  margin-left: auto;
  padding-right: 19px;
`;
const TraySlot = styled.span`
  display: flex;
  justify-content: center;
  width: ${(p) => p.$w}px;
`;
const Clock = styled.div`
  display: flex;
  flex-direction: column;
  align-items: flex-end;
  gap: 2px;
  width: 58px;
`;
const PacketTracerArt = () => (
  <g><circle cx="9" cy="13" r="8" fill="#7d8483" /><path d="M8 5q10-1 10 9l-4 6q-8 0-9-7z" fill="#174018" /><path d="M9 8l6 10M8 14l9-5M12 6l2 13" stroke="#3db54a" /><path d="M10 3l9-3 6 5-6 8z" fill="#e2b04a" stroke="#4c3818" /><path d="M10 3l9 3 6-1M19 6v6" stroke="#4c3818" fill="none" /><path d="M15 19l4 6" stroke="#555" strokeWidth="3" /></g>
);
const taskArt = {
  win: <path d="M1 1h11v11H1zM13.500 1H25v11H13.500zM1 13.500h11V25H1zM13.500 13.500H25V25H13.500z" fill="url(#gWin)" />,
  files: (<g><path d="M1 3h10l3 3h11v6H1z" fill="#e59b0c" /><path d="M1 7h24v17H1z" fill="#ffcf48" /><path d="M5 24v-4q0-3 3-3h10q3 0 3 3v4z" fill="#1681d4" /></g>),
  telegram: (<g><circle cx="13" cy="13" r="11" fill="#29a3dc" /><path d="M5 13l15-6-3 12-5-3-2 3-1-4z" fill="#fff" /></g>),
  vs: (<g><path d="M18 1l7 3v18l-7 3L8 15l-4 3-3-1.500v-7L4 8l4 3zM18 8l-6 5 6 5zM3.500 11v4l2.500-2z" fill="#8e5bd0" fillRule="evenodd" /><path d="M18 1l7 3v18l-7 3z" fill="#c49bf0" /></g>),
  code: (<g><path d="M18 1v7L4 19l-3-2.500L18 1zM18 25v-7L4 7 1 9.500z" fill="#1270b8" /><path d="M18 1l7 3v18l-7 3z" fill="#30a7ee" /></g>),
  edge: (<g><circle cx="14" cy="12" r="11.500" fill="url(#gEdge)" /><path d="M12 13q4-5 7-1 0 4-3 4 4 3 9-1-4 7-11 8-5-4-2-10z" fill="#0f4f96" /><path d="M14 13q4-3 5 0 0 3-3 4-3-1-2-4z" fill="#e9f5ff" /><circle cx="7" cy="19" r="6" fill="#bec5cb" /><circle cx="7" cy="17" r="2.200" fill="#fff" /><path d="M3 22q4-5 8 0-4 4-8 0z" fill="#fff" /></g>),
  notepad: (<g><path d="M3 3h20v21H3z" fill="#f3f6f0" /><path d="M3 16h20v8H3z" fill="#7ac74b" /><path d="M3 3h20" stroke="#8a9" strokeWidth="2" strokeDasharray="2 1" /><path d="M6 8v6M8 10h5M8 13h3" stroke="#222" /><path d="M22 2l3 2-9 14-3 1 1-3z" fill="#e8c03a" stroke="#7e3c20" strokeWidth=".7" /></g>),
  tracer: <PacketTracerArt />,
  elephant: (<g><path d="M3 3q5-4 9-1 6-3 11 1 3 5-1 11l3 2q-3 3-6 1v5q-2 4-5 2l-1-8-4-1-2 3Q3 16 2 8z" fill="#336791" stroke="#dfeaf3" strokeWidth="1.200" /><path d="M9 4q4 4 1 10M17 4q-4 5 0 10M14 12v11" fill="none" stroke="#e5eef5" /></g>),
  photo: (<g><path d="M2 1h23v24H2z" fill="#1d78d3" /><path d="M2 1h23v12H2z" fill="#279be8" /><path d="M2 19l8-10 10 16H2z" fill="#17345f" /><path d="M12 18l5-5 8 8v4H12z" fill="#235eab" /><circle cx="18" cy="6" r="2" fill="#fff" /></g>),
};
const tasks = [["win", 0], ["files", 1], ["telegram", 0], ["vs", 1], ["code", 0], ["edge", 1], ["notepad", 1], ["tracer", 1], ["elephant", 1], ["photo", 1]];

export default function App() {
  return (
    <Screen>
      <Global />
      <Defs />
      <TitleBar>
        <svg width="16" height="17" viewBox="0 0 26 26"><PacketTracerArt /></svg>
        <Fit w={554} size={12} font={SEGOE}>{"Cisco Packet Tracer - C:\\Users\\Asus\\Downloads\\14.8.1 Packet Tracer - TCP and UDP Communications.pka"}</Fit>
        <WindowButtons>
          <svg width="11" height="11" viewBox="0 0 11 11"><path d="M0 5.500h10" stroke="#fff" /></svg>
          <svg width="11" height="11" viewBox="0 0 11 11" fill="none" stroke="#fff"><path d="M.5 2.500h8v8h-8zM2.500 2V.5h8v8H9" /></svg>
          <svg width="11" height="11" viewBox="0 0 11 11"><path d="M.5.5l10 10M10.500.5l-10 10" stroke="#fff" /></svg>
        </WindowButtons>
      </TitleBar>
      <MenuBar>
        {[["File", 32, 16], ["Edit", 33, 18], ["Options", 53, 38], ["View", 41, 25], ["Tools", 42, 26], ["Extensions", 69, 53], ["Window", 56, 40], ["Help", 30, 21]].map(([t, w, f]) => (
          <MenuItem key={t} $w={w}><Fit w={f}>{t === "Extensions" ? <>E<u>x</u>tensions</> : <><u>{t[0]}</u>{t.slice(1)}</>}</Fit></MenuItem>
        ))}
      </MenuBar>
      <ToolBar>{renderTools(toolsTop)}<HelpMark>?</HelpMark></ToolBar>
      <ToolBar $pad={1.500}><ActiveTool><Glyph name="marquee" /></ActiveTool>{renderTools(toolsBottom)}</ToolBar>

      <NavBar>
        <Pill $w={83} $mr={3} $on $gap={2}>
          <svg width="20" height="18" viewBox="0 0 20 18" fill="#fff"><path d="M3 12l6-8 7 10" fill="none" stroke="#fff" /><circle cx="3" cy="12" r="2.500" /><circle cx="9.500" cy="4" r="3" /><circle cx="16.500" cy="14" r="3" /></svg>
          <Fit w={51} size={15} bold>Logical</Fit>
        </Pill>
        <Pill $w={86} $mr={3} $gap={5}>
          <svg width="14" height="19" viewBox="0 0 14 19"><path d="M.5.5h13v18H.5zM0 4.500h14M0 8h14M0 11.500h14M0 15h14" fill="none" stroke="#8794aa" /></svg>
          <Fit w={55} size={15}>Physical</Fit>
        </Pill>
        <Fit w={59} size={10}>x: 491, y: 317</Fit>
        <RootField><Fit w={23}>Root</Fit></RootField>
        <Pill $w={30} $grey $mr={1}><svg width="20" height="16" viewBox="0 0 20 16"><path d="M5 5h8q5 0 5 4.500T12 14H9" fill="none" stroke="#fff" strokeWidth="2" /><path d="M0 5l7-5v10z" fill="#fff" /></svg></Pill>
        <Pill $w={32} $mr={1}><svg width="22" height="20" viewBox="0 0 22 20" fill="#fff"><path d="M4 15q-5-1-3-6l3-1q1-6 6-6 5 0 6 5 5 1 4 5l-3-1-4 4z" /><path d="M16 12v7M12.500 15.500h7" stroke="#fff" strokeWidth="2.500" /></svg></Pill>
        <Pill $w={30} $grey $mr={1}><svg width="20" height="20" viewBox="0 0 20 20" fill="#fff"><path d="M10 0l3 4H7zM10 20l3-4H7zM0 10l4-3v6zM20 10l-4-3v6z" /><circle cx="10" cy="10" r="2" /></svg></Pill>
        <Pill $w={32} $mr={1}><svg width="20" height="16" viewBox="0 0 20 16" fill="#fff"><path d="M0 15l6-9 4 5 3-3 6 7z" /><circle cx="16" cy="3" r="2.500" /></svg></Pill>
        <Pill $w={73} $gap={2}>
          <svg width="20" height="20" viewBox="0 0 20 20"><circle cx="7" cy="13" r="6.500" fill="#fff" /><path d="M1 13h12M7 7v12M2 10h10M2 16h10M4 8q-2 5 0 10M10 8q2 5 0 10" stroke={NAVY} strokeWidth=".8" fill="none" /><path d="M11 2.500h8M12 7.500h8" stroke="#fff" strokeWidth="1.500" /><path d="M9.500 2.500l3-2.500v5zM20 7.500L17 5v5z" fill="#fff" /></svg>
          <Fit w={42}>16:37:00</Fit>
        </Pill>
      </NavBar>

      <Main>
        <Workspace>
          <Canvas>
            <Topology />
            <HostNote><Fit w={90}>multiserver.pt.ptu</Fit><HostAddress><Fit w={70}>192.168.1.254</Fit></HostAddress></HostNote>
            <CanvasLabel $x={323} $y={125}><Fit w={54}>MultiServer</Fit></CanvasLabel>
            <CanvasLabel $x={321} $y={241}><Fit w={34}>Switch</Fit></CanvasLabel>
            <CanvasLabel $x={210} $y={248}><Fit w={54}>HTTP Client</Fit></CanvasLabel>
            <CanvasLabel $x={250.500} $y={334}><Fit w={47}>FTP Client</Fit></CanvasLabel>
          </Canvas>
          <VTrack><Thumb $w={2} $h={41} /></VTrack>
          <HTrack><Thumb $w={223} $h={2} /></HTrack>
        </Workspace>
        <Simulation />
      </Main>

      <PlayBar>
        <Fit w={91}>Time: 00:17:10.610</Fit>
        <Pill $w={32}><svg width="20" height="22" viewBox="0 0 20 22"><path d="M6 5.500a8 8 0 1 0 7 0" fill="none" stroke="#fff" strokeWidth="2.200" /><path d="M4 4.500l7-4v7z" fill="#fff" /><circle cx="10" cy="12" r="1.500" fill="#fff" /></svg></Pill>
        <Fit w={89}>PLAY CONTROLS:</Fit>
        <SquareBtn><PrevIcon /></SquareBtn><SquareBtn><PlayIcon /></SquareBtn><SquareBtn><NextIcon /></SquareBtn>
        <RightModes>
          <Pill $w={78} $h={26} $bw={2} $mr={2} $on $gap={2}>
            <svg width="16" height="17" viewBox="0 0 16 17"><path d="M0 1h15M0 4.500h15M0 8h15M0 11.500h6M0 15h6" stroke="#fff" strokeWidth="1.500" /><path d="M7 13q4-5 8 0-4 4-8 0z" fill="#fff" /><circle cx="11" cy="13" r="1" fill={TEAL} /></svg>
            <Fit w={48}>Event List</Fit>
          </Pill>
          <Pill $w={90} $mr={2} $gap={2}>
            <svg width="21" height="21" viewBox="0 0 21 21"><circle cx="10.500" cy="10.500" r="10.200" fill="#fff" /><path d="M10 5v6l3 3" fill="none" stroke={NAVY} strokeWidth="1.500" /></svg>
            <Fit w={60} size={15}>Realtime</Fit>
          </Pill>
          <Pill $w={106} $on $gap={2}>
            <svg width="20" height="18" viewBox="0 0 20 18" fill="#fff"><path d="M3 7q0-4 4-4l1-3h5l1 3q4 0 4 4v6H3zM0 13h20v5h-3v-2h-2v2H5v-2H3v2H0z" /><path d="M6 8h8" stroke={TEAL} strokeWidth="2" /></svg>
            <Fit w={74} size={15} bold>Simulation</Fit>
          </Pill>
        </RightModes>
      </PlayBar>

      <Bottom>
        <Palette>
          <PaletteRow>{["network", "end", "board", "bolt", "folder", "clouds"].map((n, i) => <PaletteItem key={n} $on={i === 0}><Art name={n} /></PaletteItem>)}</PaletteRow>
          <SearchBox />
          <PaletteRow>{["router", "switch", "hub", "wifi", "asa", "cloud"].map((n, i) => <PaletteItem key={n} $on={i === 0}><Art name={n} /></PaletteItem>)}</PaletteRow>
        </Palette>
        <DeviceColumn>
          <DeviceList>
            <DeviceRow>
              {devices.map(([n, w]) => (
                <Device key={n}><RouterArt /><DeviceName><Fit w={w} size={n.length > 6 ? 8 : 8.500} font={VERDANA}>{n}</Fit></DeviceName></Device>
              ))}
            </DeviceRow>
            <DeviceTrack><Thumb $w={93} $h={2} /></DeviceTrack>
          </DeviceList>
          <ModelBox><Fit w={47}>CGR1240</Fit></ModelBox>
        </DeviceColumn>
        <Splitter><svg width="9" height="11" viewBox="0 0 9 11"><path d="M0 0l9 5.500L0 11z" fill="#696969" /></svg></Splitter>
        <Scenario>
          <ScenarioLine $g={6}>
            <Btn $w={34} $h={30} $r={6}><svg width="17" height="17" viewBox="0 0 17 17"><circle cx="8.500" cy="8.500" r="8.300" fill="#fff" /><path d="M8.500 4v2M8.500 7.500v5" stroke={NAVY} strokeWidth="1.600" /></svg></Btn>
            <Select><Fit w={53}>Scenario 0</Fit><svg width="9" height="6" viewBox="0 0 9 6"><path d="M.5.5l4 4 4-4" fill="none" stroke="#555" /></svg></Select>
          </ScenarioLine>
          <ScenarioLine $g={19}>
            <Btn $w={33} $h={24}><Fit w={22}>New</Fit></Btn>
            <Btn $w={40} $h={24}><Fit w={30}>Delete</Fit></Btn>
          </ScenarioLine>
          <Btn $w={127} $h={24}><Fit w={117}>Toggle PDU List Window</Fit></Btn>
        </Scenario>
        <PduList>
          <PduHead>{pduCols.map(([t, w, f]) => <PduCol key={t} $w={w}><Fit w={f}>{t}</Fit></PduCol>)}</PduHead>
          <PduTrack><Thumb $w={419} $h={2} /></PduTrack>
        </PduList>
      </Bottom>

      <TaskBar>
        {tasks.map(([n, dot]) => (
          <TaskItem key={n} $dot={dot} $active={n === "tracer"}><svg width="25" height="25" viewBox="0 0 26 26">{taskArt[n]}</svg></TaskItem>
        ))}
        <Tray>
          <TraySlot $w={24}><svg width="12" height="8" viewBox="0 0 12 8"><path d="M1 7l5-5.500L11 7" fill="none" stroke="#fff" strokeWidth="1.300" /></svg></TraySlot>
          <TraySlot $w={24}><svg width="12" height="15" viewBox="0 0 12 15" fill="none" stroke="#fff"><path d="M3 4V1h5v3M6 13.500H1.500V4.500h8V7" /><circle cx="8" cy="10.500" r="2.500" strokeWidth="1.800" /><path d="M4 2.500h2" /></svg></TraySlot>
          <TraySlot $w={24}><svg width="16" height="17" viewBox="0 0 16 17" fill="none" stroke="#f47b13"><circle cx="10" cy="6" r="4.200" strokeWidth="3" /><path d="M7 9l-5.500 6" strokeWidth="3" /></svg></TraySlot>
          <TraySlot $w={22}><svg width="15" height="15" viewBox="0 0 15 15"><path d="M1 5h12v9H1z" fill="#ddd" /><path d="M1 5h9v4H1z" fill="#1431b5" /><path d="M8 6l1-4 4-2 2 1-3 4-2 3z" fill="#e81123" /></svg></TraySlot>
          <TraySlot $w={36}><svg width="16" height="12" viewBox="0 0 16 12" fill="none" stroke="#fff"><path d="M.5.5h15v10.500H.5z" /><path d="M3 3.500h10.500M3 5.800h10.500" strokeDasharray="1.500 1" /><path d="M4.500 8.500h7" /></svg></TraySlot>
          <TraySlot $w={40}><Fit w={24} size={12} font={SEGOE}>ENG</Fit></TraySlot>
          <TraySlot $w={36}><svg width="17" height="14" viewBox="0 0 17 14" fill="none" stroke="#fff" strokeWidth="1.300"><path d="M1 5q7.500-7 15 0M3.500 8q5-5 10 0M6 10.500q2.500-2.500 5 0" /><circle cx="8.500" cy="12" r="1" /></svg></TraySlot>
          <TraySlot $w={12}><svg width="17" height="14" viewBox="0 0 17 14" fill="none" stroke="#fff" strokeWidth="1.100"><path d="M1 5h3l4-3.500v11L4 9H1zM10 5q1.500 2 0 4M12 3q3 4 0 8M14 1.500q4 5.500 0 11" /></svg></TraySlot>
          <TraySlot $w={37}><svg width="17" height="15" viewBox="0 0 17 15" fill="none" stroke="#fff"><path d="M6 3.500h8.500v8.500H4.500V8" strokeWidth="1.400" /><path d="M8 5.500h5v5H8z" fill="#fff" /><path d="M1 3h5v2q0 2-2.500 2T1 5zM2 0v3M5 0v3" /><path d="M15.500 6v3" /></svg></TraySlot>
          <Clock><Fit w={41} size={12} font={SEGOE}>2:21 PM</Fit><Fit w={53} size={12} font={SEGOE}>5/31/2022</Fit></Clock>
        </Tray>
      </TaskBar>

      <PduDialog />
    </Screen>
  );
}
